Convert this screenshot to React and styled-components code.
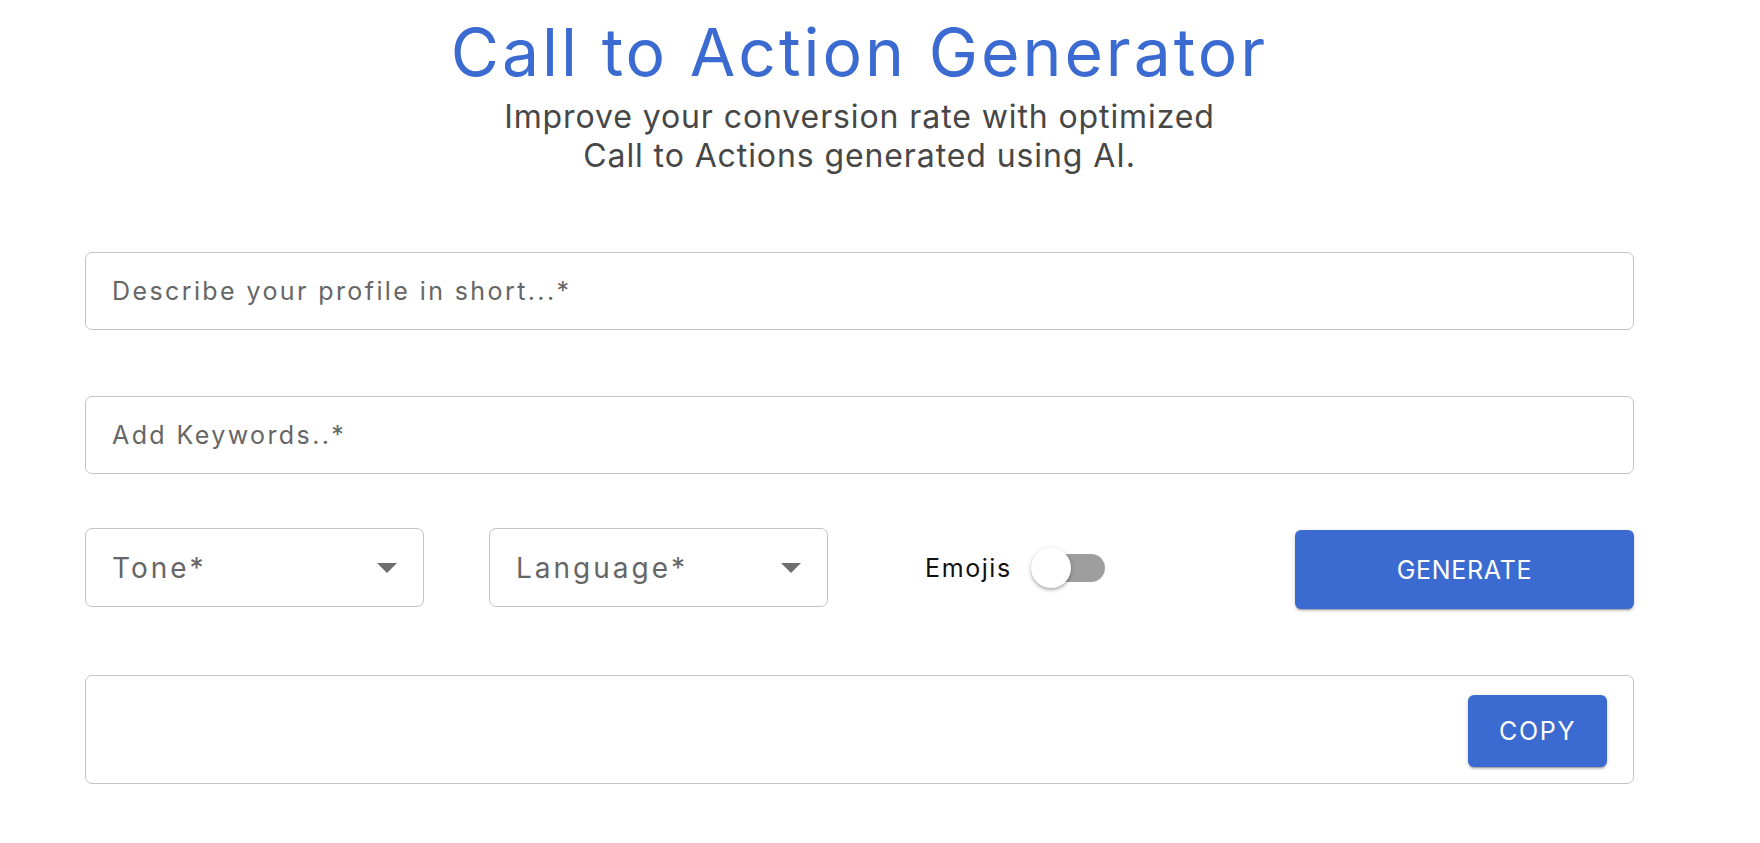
import React, { useState } from 'react';
import styled, { createGlobalStyle } from 'styled-components';

const GlobalStyle = createGlobalStyle`
  body {
    margin: 0;
    background: #ffffff;
    font-family: Inter, "Noto Sans", sans-serif;
  }
`;

const Page = styled.main`
  width: 1549px;
  margin-left: 85px;
  padding-top: 12px;
`;

const Header = styled.header`
  display: flex;
  flex-direction: column;
  align-items: center;
  text-align: center;
`;

const Title = styled.h1`
  margin: 0;
  font-weight: 400;
  font-size: 66px;
  line-height: 80px;
  letter-spacing: 3px;
  color: #3b6bd0;
`;

const Subtitle = styled.p`
  margin: 5px 0 0;
  font-size: 32px;
  line-height: 39px;
  letter-spacing: 0.9px;
  color: #474747;
`;

const Form = styled.section`
  display: flex;
  flex-direction: column;
  gap: 66px;
  margin-top: 77px;
`;

const TextField = styled.input`
  box-sizing: border-box;
  width: 100%;
  height: 78px;
  padding: 0 26px;
  border: 1.5px solid #c4c4c4;
  border-radius: 7px;
  font-family: inherit;
  font-size: 25px;
  letter-spacing: 2.4px;
  color: #222;
  outline: none;

  &::placeholder {
    color: #666666;
  }
`;

const Row = styled.div`
  display: flex;
  align-items: center;
  gap: 65px;
  margin-top: -14px;
`;

const Select = styled.div`
  box-sizing: border-box;
  width: 339px;
  height: 79px;
  padding: 0 26px 0 26px;
  display: flex;
  align-items: center;
  justify-content: space-between;
  border: 1.5px solid #c4c4c4;
  border-radius: 7px;
  font-size: 28px;
  letter-spacing: 3px;
  color: #666666;
  cursor: pointer;
`;

const Caret = () => (
  <svg width="20" height="10" viewBox="0 0 20 10">
    <path d="M0 0 L20 0 L10 10 Z" fill="#6e6e6e" />
  </svg>
);

const SwitchLabel = styled.label`
  display: flex;
  align-items: center;
  gap: 25px;
  margin-left: 32px;
  font-size: 25px;
  letter-spacing: 1.6px;
  color: #111;
  cursor: pointer;
`;

const Track = styled.span`
  position: relative;
  width: 68px;
  height: 28px;
  border-radius: 14px;
  background: ${({ on }) => (on ? '#9db5e8' : '#9e9e9e')};
`;

const Thumb = styled.span`
  position: absolute;
  top: -6px;
  left: ${({ on }) => (on ? '34px' : '-6px')};
  width: 40px;
  height: 40px;
  border-radius: 50%;
  background: ${({ on }) => (on ? '#3b6bd0' : '#ffffff')};
  box-shadow: 0 2px 3px rgba(0, 0, 0, 0.25), 0 1px 6px rgba(0, 0, 0, 0.12);
  transition: left 0.15s;
`;

const Button = styled.button`
  box-sizing: border-box;
  width: ${({ wide }) => (wide ? '339px' : '139px')};
  height: ${({ wide }) => (wide ? '79px' : '72px')};
  margin-top: ${({ wide }) => (wide ? '4px' : '0')};
  border: none;
  border-radius: 6px;
  background: #3b6bd0;
  color: #ffffff;
  font-family: inherit;
  font-size: 25px;
  letter-spacing: ${({ wide }) => (wide ? '0.7px' : '1.7px')};
  text-transform: uppercase;
  box-shadow: 0 3px 1px -2px rgba(0, 0, 0, 0.2), 0 2px 2px rgba(0, 0, 0, 0.14), 0 1px 5px rgba(0, 0, 0, 0.12);
  cursor: pointer;
`;

const Spacer = styled.div`
  flex: 1;
`;

const Output = styled.div`
  box-sizing: border-box;
  height: 109px;
  padding: 19px 26px 0 0;
  display: flex;
  justify-content: flex-end;
  align-items: flex-start;
  border: 1.5px solid #c4c4c4;
  border-radius: 7px;
`;

function App() {
  const [emojis, setEmojis] = useState(false);

  return (
    <>
      <GlobalStyle />
      <Page>
        <Header>
          <Title>Call to Action Generator</Title>
          <Subtitle>
            Improve your conversion rate with optimized
            <br />
            Call to Actions generated using AI.
          </Subtitle>
        </Header>
        <Form>
          <TextField placeholder="Describe your profile in short...*" />
          <TextField placeholder="Add Keywords..*" />
          <Row>
            <Select>
              Tone*
              <Caret />
            </Select>
            <Select>
              Language*
              <Caret />
            </Select>
            <SwitchLabel onClick={() => setEmojis(!emojis)}>
              Emojis
              <Track on={emojis}>
                <Thumb on={emojis} />
              </Track>
            </SwitchLabel>
            <Spacer />
            <Button wide>Generate</Button>
          </Row>
          <Output>
            <Button>Copy</Button>
          </Output>
        </Form>
      </Page>
    </>
  );
}

export default App;
